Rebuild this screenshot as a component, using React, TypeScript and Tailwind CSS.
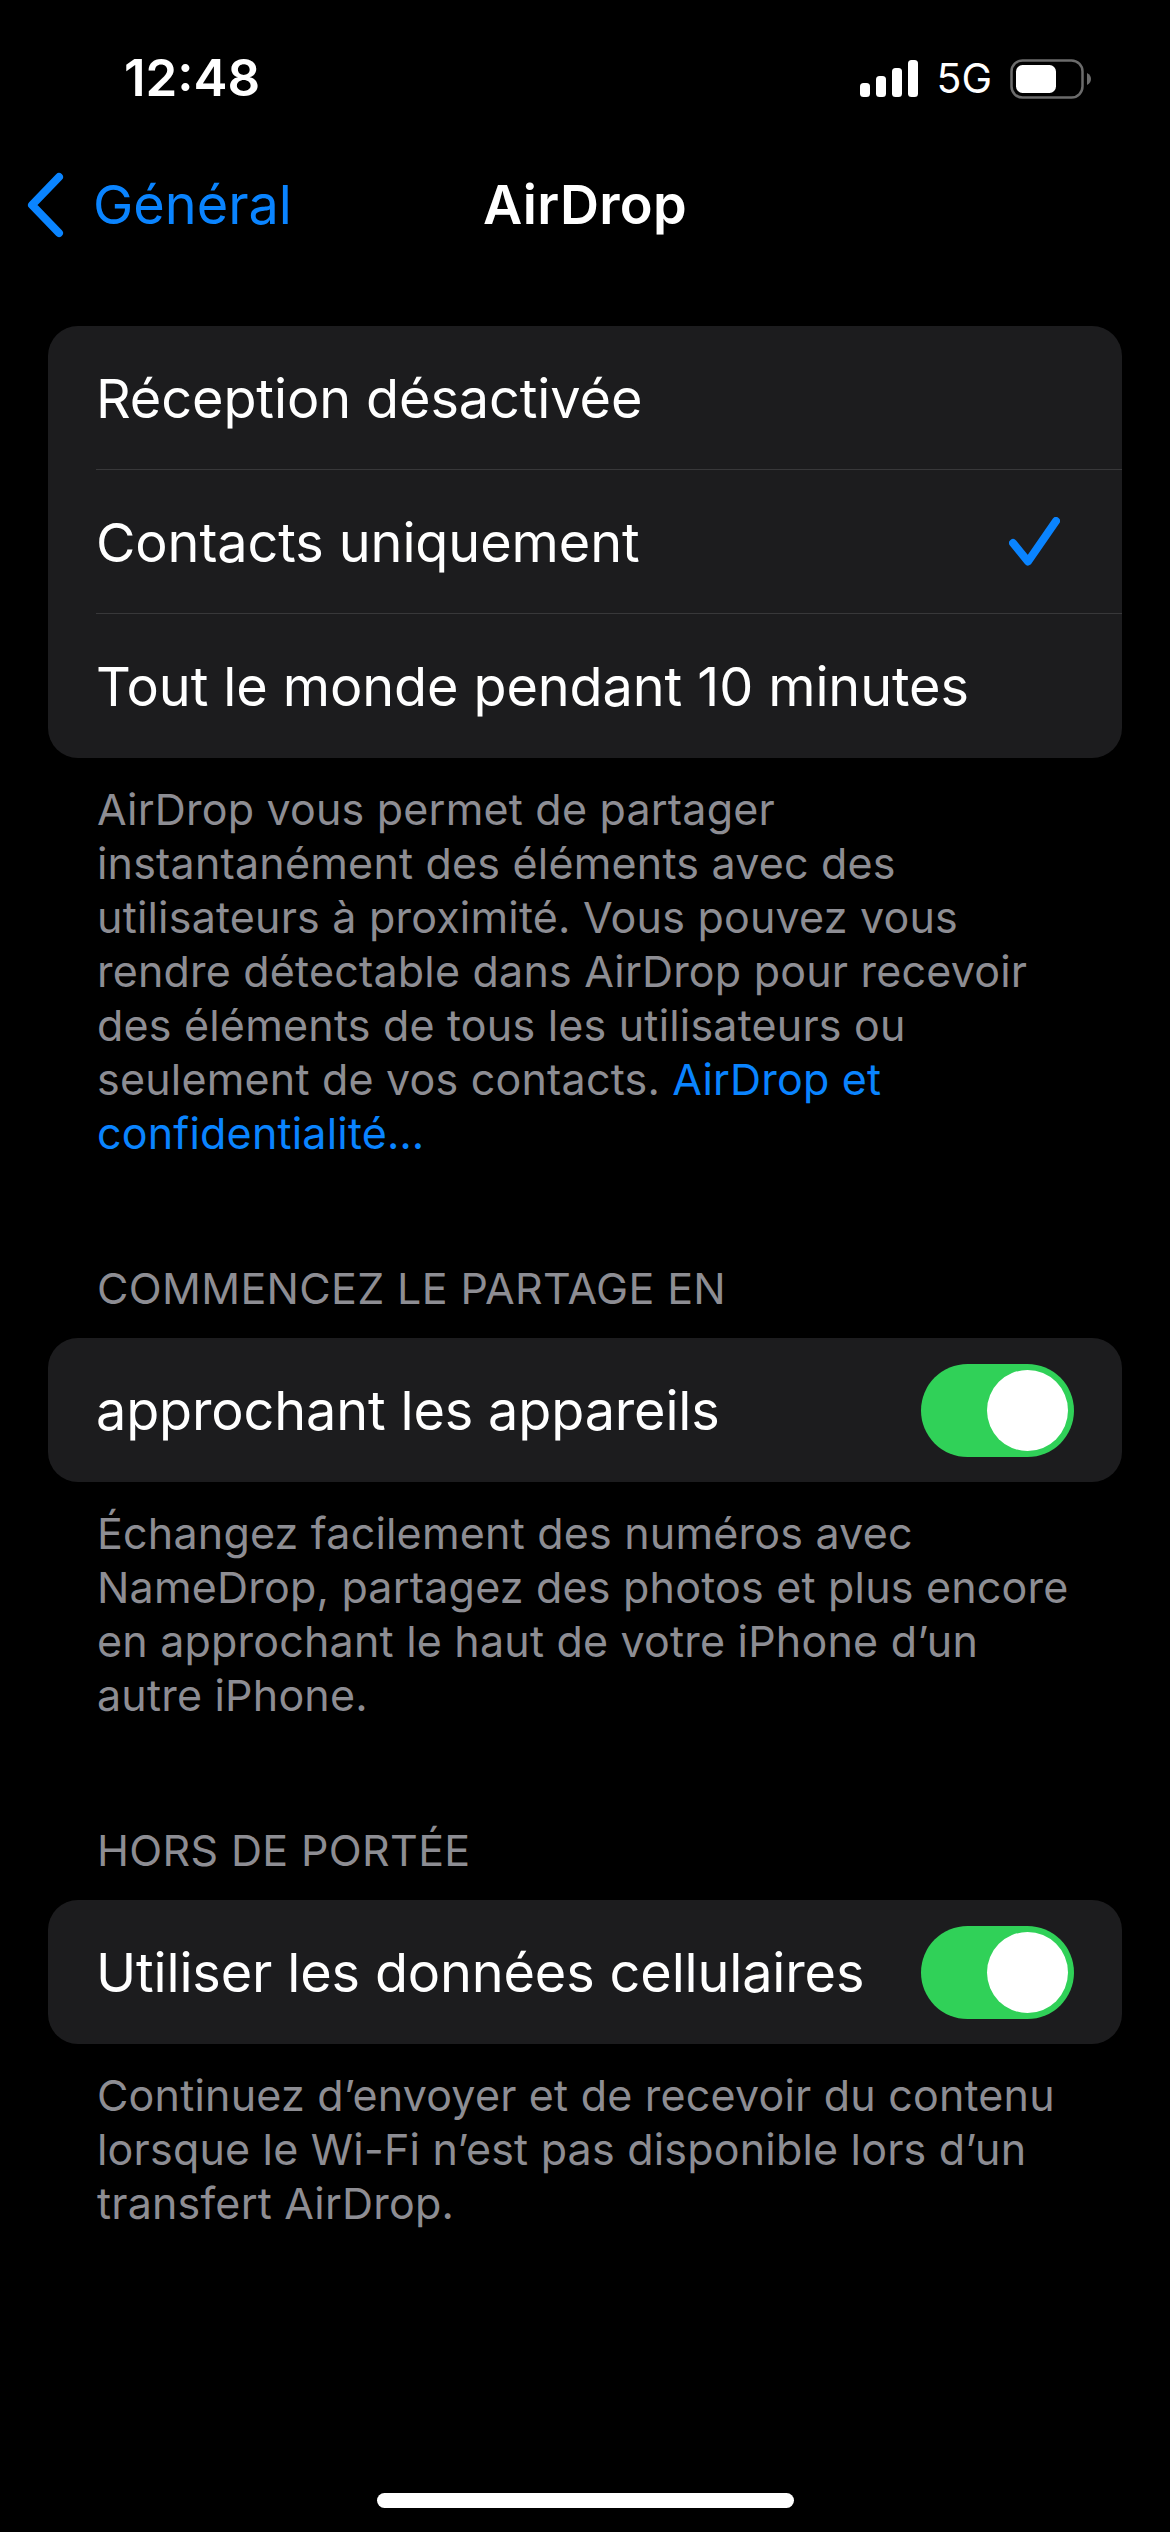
function Toggle() {
    return (
        <div className="flex h-[93px] w-[153px] shrink-0 items-center justify-end rounded-full bg-[#30d158] pr-[6px]">
            <div className="h-[81px] w-[81px] rounded-full bg-white" />
        </div>
    );
}

function ToggleCard({ label }: { label: string }) {
    return (
        <div className="flex h-[144px] items-center justify-between rounded-[30px] bg-[#1c1c1e] pl-[48px] pr-[48px]">
            <span className="pt-[2px] text-[54px] leading-none tracking-[-0.15px] text-white">{label}</span>
            <Toggle />
        </div>
    );
}

function Option({ label, checked, last }: { label: string; checked?: boolean; last?: boolean }) {
    return (
        <div className={`flex h-[144px] items-center justify-between pr-[62px] ${last ? '' : 'border-b border-[#38383a]'}`}>
            <span className="pt-[2px] text-[54px] leading-none tracking-[-0.1px] text-white">{label}</span>
            {checked && (
                <svg width="51" height="50" viewBox="0 0 51 50" fill="none">
                    <path d="M4 26 L19 44.5 L47 4" stroke="#0a84ff" strokeWidth="8" strokeLinecap="round" strokeLinejoin="round" />
                </svg>
            )}
        </div>
    );
}

export default function App() {
    return (
        <div className="flex h-[2532px] w-[1170px] flex-col bg-black font-['Inter',sans-serif] text-white">
            {/* status bar */}
            <div className="flex h-[154px] items-start justify-between pl-[124px] pr-[78px] pt-[48px]">
                <span className="text-[51px] font-semibold leading-[60px]">12:48</span>
                <div className="flex items-center gap-[18px] pt-[10px]">
                    <svg width="58" height="37" viewBox="0 0 58 37" fill="white">
                        <rect x="0" y="23" width="10" height="14" rx="3.5" />
                        <rect x="16" y="16" width="10" height="21" rx="3.5" />
                        <rect x="32" y="8" width="10" height="29" rx="3.5" />
                        <rect x="48" y="0" width="10" height="37" rx="3.5" />
                    </svg>
                    <span className="text-[41px] leading-none">5G</span>
                    <svg width="82" height="40" viewBox="0 0 82 40" fill="none">
                        <rect x="1.5" y="1.5" width="71" height="37" rx="11" stroke="#6b6b6b" strokeWidth="2.5" />
                        <rect x="6" y="6" width="40" height="28" rx="6.5" fill="white" />
                        <path d="M77 14 C80 15.5 81 18 81 20 C81 22 80 24.5 77 26 Z" fill="#6b6b6b" />
                    </svg>
                </div>
            </div>

            {/* nav bar */}
            <div className="relative flex h-[102px] items-center">
                <div className="flex items-center gap-[25px] pl-[26px] text-[#0a84ff]">
                    <svg width="42" height="66" viewBox="0 0 42 66" fill="none">
                        <path d="M33 5 L6 33 L33 61" stroke="#0a84ff" strokeWidth="8" strokeLinecap="round" strokeLinejoin="round" />
                    </svg>
                    <span className="text-[54px] leading-none">Général</span>
                </div>
                <span className="absolute inset-x-0 text-center text-[54px] font-semibold leading-none tracking-[0.3px]">AirDrop</span>
            </div>

            <div className="mt-[70px] px-[48px]">
                <div className="rounded-[30px] bg-[#1c1c1e] pl-[48px]">
                    <Option label="Réception désactivée" />
                    <Option label="Contacts uniquement" checked />
                    <Option label="Tout le monde pendant 10 minutes" last />
                </div>
                <p className="mt-[24px] pl-[49px] text-[43px] leading-[54px] tracking-[0.2px] text-[#8d8d93]">
                    AirDrop vous permet de partager<br />
                    instantanément des éléments avec des<br />
                    utilisateurs à proximité. Vous pouvez vous<br />
                    rendre détectable dans AirDrop pour recevoir<br />
                    des éléments de tous les utilisateurs ou<br />
                    seulement de vos contacts. <span className="text-[#0a84ff]">AirDrop et<br />confidentialité…</span>
                </p>

                <div className="mb-[23px] mt-[101px] pl-[49px] text-[43px] leading-[54px] tracking-[0.35px] text-[#8d8d93]">COMMENCEZ LE PARTAGE EN</div>
                <ToggleCard label="approchant les appareils" />
                <p className="mt-[24px] pl-[49px] text-[43px] leading-[54px] tracking-[0.2px] text-[#8d8d93]">
                    Échangez facilement des numéros avec<br />
                    NameDrop, partagez des photos et plus encore<br />
                    en approchant le haut de votre iPhone d’un<br />
                    autre iPhone.
                </p>

                <div className="mb-[23px] mt-[101px] pl-[49px] text-[43px] leading-[54px] tracking-[0.35px] text-[#8d8d93]">HORS DE PORTÉE</div>
                <ToggleCard label="Utiliser les données cellulaires" />
                <p className="mt-[24px] pl-[49px] text-[43px] leading-[54px] tracking-[0.2px] text-[#8d8d93]">
                    Continuez d’envoyer et de recevoir du contenu<br />
                    lorsque le Wi-Fi n’est pas disponible lors d’un<br />
                    transfert AirDrop.
                </p>
            </div>

            {/* home indicator */}
            <div className="mb-[24px] mt-auto flex justify-center">
                <div className="h-[15px] w-[417px] rounded-[8px] bg-white" />
            </div>
        </div>
    );
}
